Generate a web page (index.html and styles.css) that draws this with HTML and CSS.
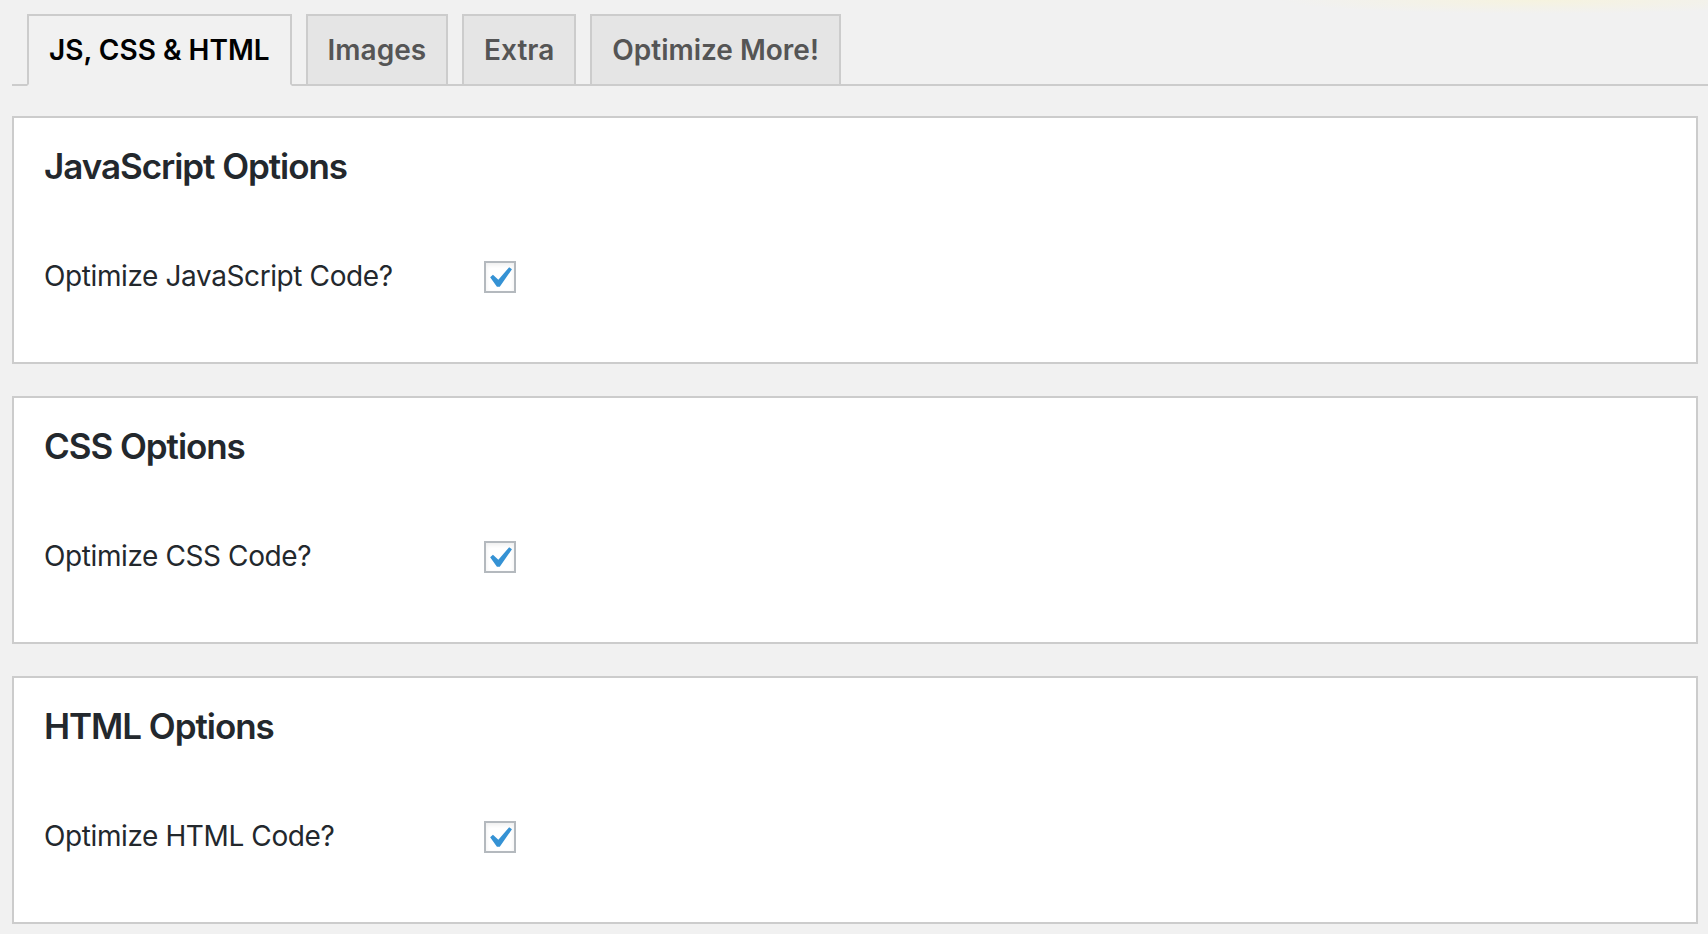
FILE: index.html
```html
<!DOCTYPE html>
<html lang="en">
<head>
<meta charset="utf-8">
<title>Optimization Settings</title>
<link rel="stylesheet" href="styles.css">
</head>
<body>
<div class="wrap">
  <nav class="tabs">
    <a class="tab tab-active">JS, CSS &amp; HTML</a>
    <a class="tab">Images</a>
    <a class="tab">Extra</a>
    <a class="tab">Optimize More!</a>
  </nav>

  <section class="panel">
    <h2 class="panel-title">JavaScript Options</h2>
    <div class="row">
      <span class="row-label">Optimize JavaScript Code?</span>
      <span class="checkbox"><svg viewBox="0 0 20 20"><path d="M14.83 4.89l1.34.94-5.81 8.38H9.02L5.78 9.67l1.34-1.25 2.57 2.4z"/></svg></span>
    </div>
  </section>

  <section class="panel">
    <h2 class="panel-title">CSS Options</h2>
    <div class="row">
      <span class="row-label">Optimize CSS Code?</span>
      <span class="checkbox"><svg viewBox="0 0 20 20"><path d="M14.83 4.89l1.34.94-5.81 8.38H9.02L5.78 9.67l1.34-1.25 2.57 2.4z"/></svg></span>
    </div>
  </section>

  <section class="panel">
    <h2 class="panel-title">HTML Options</h2>
    <div class="row">
      <span class="row-label">Optimize HTML Code?</span>
      <span class="checkbox"><svg viewBox="0 0 20 20"><path d="M14.83 4.89l1.34.94-5.81 8.38H9.02L5.78 9.67l1.34-1.25 2.57 2.4z"/></svg></span>
    </div>
  </section>
</div>
</body>
</html>
```

FILE: styles.css
```css
* { box-sizing: border-box; }

html, body {
  margin: 0;
  padding: 0;
}

body {
  background-color: #f1f1f1;
  background-image: radial-gradient(ellipse 260px 14px at 1540px 0, #f6f3df 0%, rgba(246, 243, 223, 0) 100%);
  background-repeat: no-repeat;
  font-family: Inter, "Noto Sans", "Liberation Sans", sans-serif;
  color: #23282d;
  height: 934px;
  overflow: hidden;
}

.wrap {
  padding-left: 12px;
}

.tabs {
  display: flex;
  align-items: flex-end;
  padding-top: 14px;
  padding-left: 15px;
  border-bottom: 2px solid #cccccc;
  gap: 14px;
}

.tab {
  display: block;
  padding: 10px 20px;
  border: 2px solid #cccccc;
  border-bottom: none;
  background: #e5e5e5;
  color: #555555;
  font-size: 28px;
  line-height: 48px;
  font-weight: 600;
  text-decoration: none;
  white-space: nowrap;
}

.tab-active {
  background: #f1f1f1;
  color: #000000;
  border-bottom: 2px solid #f1f1f1;
  margin-bottom: -2px;
}

.panel {
  margin: 30px 10px 32px 0;
  background: #ffffff;
  border: 2px solid #cccccc;
  padding: 26px 28px 69px 30px;
}

.panel-title {
  margin: 0 0 72px;
  font-size: 35px;
  line-height: 44px;
  letter-spacing: -1.05px;
  font-weight: 600;
  color: #23282d;
}

.row {
  display: flex;
  align-items: flex-start;
}

.row-label {
  width: 440px;
  font-size: 28px;
  line-height: 32px;
  letter-spacing: -0.4px;
  color: #23282d;
}

.checkbox {
  position: relative;
  margin-top: 1px;
  width: 32px;
  height: 32px;
  border: 2px solid #b4b9be;
  background: #ffffff;
  box-shadow: inset 0 2px 4px rgba(0, 0, 0, 0.07);
}

.checkbox svg {
  position: absolute;
  left: -8px;
  top: -6px;
  width: 42px;
  height: 42px;
  fill: #3592d4;
}
```
